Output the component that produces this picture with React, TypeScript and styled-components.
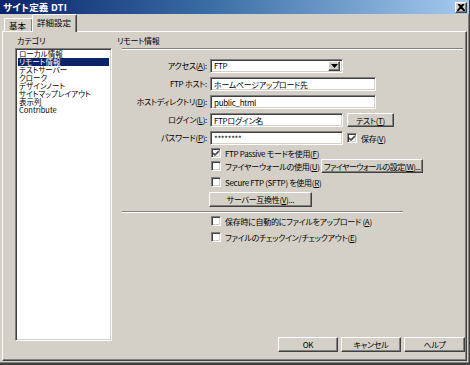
import React from 'react';
import styled, { createGlobalStyle, css } from 'styled-components';

const GlobalStyle = createGlobalStyle`
    html, body {
        margin: 0;
        padding: 0;
        background: #d4d0c8;
    }
    body {
        font-family: "Noto Sans CJK JP", "Noto Sans", sans-serif;
        font-feature-settings: "palt";
        color: #000;
    }
`;

const FS = '8px';

const raised = css`
    border: 1px solid;
    border-color: #ffffff #404040 #404040 #ffffff;
    box-shadow: inset -1px -1px 0 #808080;
`;

const sunken = css`
    border: 1px solid;
    border-color: #808080 #ffffff #ffffff #808080;
    box-shadow: inset 1px 1px 0 #404040, inset -1px -1px 0 #d4d0c8;
`;

const Key = ({ k }: { k: string }) => (
    <>
        (<u>{k}</u>)
    </>
);

const categories = ['ローカル情報', 'リモート情報', 'テストサーバー', 'クローク', 'デザインノート', 'サイトマップレイアウト', '表示列', 'Contribute'];

const App = () => (
    <>
        <GlobalStyle />
        <Window>
            <TitleBar>
                <Title>サイト定義 DTI</Title>
                <CloseButton>
                    <svg width="8" height="7" viewBox="0 0 8 7">
                        <path d="M1 0 L7 7 M7 0 L1 7 M2 0 L8 7 M6 0 L0 7" stroke="#000" strokeWidth="1.2" />
                    </svg>
                </CloseButton>
            </TitleBar>

            <TabStrip>
                <Tab>基本</Tab>
                <Tab $active>詳細設定</Tab>
            </TabStrip>

            <Panel>
                <CategoryColumn>
                    <SmallLabel>カテゴリ</SmallLabel>
                    <ListBox>
                        {categories.map((item, i) => (
                            <ListItem key={item} $selected={i === 1}>
                                {item}
                            </ListItem>
                        ))}
                    </ListBox>
                </CategoryColumn>

                <ContentColumn>
                    <SectionTitle>リモート情報</SectionTitle>
                    <Etched $width={341} />

                    <FormGrid>
                        <FieldLabel>アクセス<Key k="A" />:</FieldLabel>
                        <Select>
                            <FieldText>FTP</FieldText>
                            <DropButton>
                                <svg width="7" height="4" viewBox="0 0 7 4">
                                    <path d="M0 0 H7 L3.5 4 Z" fill="#000" />
                                </svg>
                            </DropButton>
                        </Select>

                        <FieldLabel>FTP ホスト:</FieldLabel>
                        <TextBox $width={166}>ホームページアップロード先</TextBox>

                        <FieldLabel>ホストディレクトリ<Key k="D" />:</FieldLabel>
                        <TextBox $width={166}>public_html</TextBox>

                        <FieldLabel>ログイン<Key k="L" />:</FieldLabel>
                        <Inline>
                            <TextBox $width={133}>FTPログイン名</TextBox>
                            <PushButton $width={47}>テスト<Key k="T" /></PushButton>
                        </Inline>

                        <FieldLabel>パスワード<Key k="P" />:</FieldLabel>
                        <Inline>
                            <TextBox $width={133}>********</TextBox>
                            <CheckRow>
                                <CheckBox $checked />
                                保存<Key k="V" />
                            </CheckRow>
                        </Inline>
                    </FormGrid>

                    <Options>
                        <CheckRow $top={2}>
                            <CheckBox $checked />
                            FTP Passive モードを使用<Key k="F" />
                        </CheckRow>
                        <CheckRow $height={14}>
                            <CheckBox />
                            <CheckText $width={96}>ファイヤーウォールの使用<Key k="U" /></CheckText>
                            <PushButton $width={102} $tight>
                                ファイヤーウォールの設定<Key k="W" />...
                            </PushButton>
                        </CheckRow>
                        <CheckRow $top={3}>
                            <CheckBox />
                            Secure FTP (SFTP) を使用<Key k="R" />
                        </CheckRow>
                        <ButtonRow>
                            <PushButton $width={103} $height={15}>
                                サーバー互換性<Key k="V" />...
                            </PushButton>
                        </ButtonRow>
                    </Options>

                    <Separator />

                    <Options>
                        <CheckRow $top={2}>
                            <CheckBox />
                            保存時に自動的にファイルをアップロード <Key k="A" />
                        </CheckRow>
                        <CheckRow $top={4}>
                            <CheckBox />
                            ファイルのチェックイン/チェックアウト<Key k="E" />
                        </CheckRow>
                    </Options>

                    <DialogButtons>
                        <PushButton $width={60} $height={15}>OK</PushButton>
                        <PushButton $width={60} $height={15}>キャンセル</PushButton>
                        <PushButton $width={61} $height={15}>ヘルプ</PushButton>
                    </DialogButtons>
                </ContentColumn>
            </Panel>
        </Window>
    </>
);

const CheckBox = ({ $checked }: { $checked?: boolean }) => (
    <CheckSquare>
        {$checked && (
            <svg width="8" height="8" viewBox="0 0 8 8">
                <path d="M1 3.5 L3 5.5 L7 1.5 M1 4.5 L3 6.5 L7 2.5" stroke="#000" strokeWidth="1" fill="none" />
            </svg>
        )}
    </CheckSquare>
);

export default App;

const Window = styled.div`
    width: 470px;
    height: 365px;
    box-sizing: border-box;
    display: flex;
    flex-direction: column;
    background: #d4d0c8;
    border-right: 1px solid #404040;
    border-bottom: 2px solid #404040;
    box-shadow: inset -1px -1px 0 #808080;
    padding-bottom: 2px;
    overflow: hidden;
`;

const TitleBar = styled.div`
    height: 14px;
    flex: none;
    display: flex;
    align-items: center;
    justify-content: space-between;
    padding: 0 2px 0 3px;
    background: linear-gradient(to right, #0a246a 0%, #3a6ea5 45%, #a6caf0 100%);
`;

const Title = styled.div`
    color: #fff;
    font-weight: bold;
    font-size: 9.5px;
    line-height: 12px;
    letter-spacing: 0.2px;
`;

const CloseButton = styled.div`
    ${raised};
    width: 10px;
    height: 9px;
    background: #d4d0c8;
    display: flex;
    align-items: center;
    justify-content: center;
`;

const TabStrip = styled.div`
    height: 17px;
    flex: none;
    display: flex;
    align-items: flex-end;
    padding-left: 4px;
`;

const Tab = styled.div<{ $active?: boolean }>`
    position: relative;
    box-sizing: border-box;
    font-size: 8.5px;
    line-height: 10px;
    background: #d4d0c8;
    border: 1px solid;
    border-color: #ffffff #404040 transparent #ffffff;
    border-bottom: none;
    border-radius: 2px 2px 0 0;
    box-shadow: inset -1px 0 0 #808080;

    ${_ =>
        _.$active
            ? css`
                  z-index: 1;
                  height: 18px;
                  margin-bottom: -1px;
                  margin-left: -1px;
                  padding: 2px 5px 0 4px;
              `
            : css`
                  height: 13px;
                  padding: 1px 6px 0 4px;
                  width: 29px;
              `}
`;

const Panel = styled.div`
    flex: 1;
    display: grid;
    grid-template-columns: 97px 1fr;
    column-gap: 5px;
    margin: 0 2px 0 2px;
    padding: 4px 1px 7px 12px;
    border: 1px solid;
    border-color: #ffffff #404040 #404040 #ffffff;
    box-shadow: inset -1px -1px 0 #808080;
`;

const CategoryColumn = styled.div`
    display: flex;
    flex-direction: column;
`;

const SmallLabel = styled.div`
    font-size: ${FS};
    line-height: 10px;
    height: 10px;
    padding-left: 2px;
    margin-bottom: 2px;
`;

const ListBox = styled.div`
    ${sunken};
    flex: 1;
    margin-bottom: 12px;
    background: #fff;
    padding: 1px 2px;
`;

const ListItem = styled.div<{ $selected?: boolean }>`
    font-size: 7.5px;
    line-height: 8px;
    height: 8px;
    padding-left: 1px;
    white-space: nowrap;
    background: ${_ => (_.$selected ? '#0a246a' : 'transparent')};
    color: ${_ => (_.$selected ? '#fff' : '#000')};
`;

const ContentColumn = styled.div`
    display: flex;
    flex-direction: column;
    font-size: ${FS};
    letter-spacing: -0.3px;
`;

const SectionTitle = styled.div`
    font-size: ${FS};
    line-height: 10px;
    height: 10px;
    margin-bottom: 2px;
`;

const Etched = styled.div<{ $width: number }>`
    width: ${_ => _.$width}px;
    margin-left: 5px;
    height: 0;
    border-top: 1px solid #808080;
    border-bottom: 1px solid #ffffff;
`;

const FormGrid = styled.div`
    display: grid;
    grid-template-columns: 90px auto;
    column-gap: 3px;
    row-gap: 4px;
    margin-top: 9px;
    justify-content: start;
    align-items: center;
`;

const FieldLabel = styled.div`
    text-align: right;
    white-space: nowrap;
    line-height: 14px;
    font-size: ${FS};
`;

const fieldBox = css`
    ${sunken};
    box-sizing: border-box;
    height: 14px;
    background: #fff;
    display: flex;
    align-items: center;
    padding-left: 3px;
    font-size: ${FS};
    white-space: nowrap;
`;

const TextBox = styled.div<{ $width: number }>`
    ${fieldBox};
    width: ${_ => _.$width}px;
`;

const Select = styled.div`
    ${fieldBox};
    width: 133px;
    justify-content: space-between;
    padding-right: 2px;
`;

const FieldText = styled.span`
    line-height: 10px;
`;

const DropButton = styled.div`
    ${raised};
    box-sizing: border-box;
    width: 12px;
    height: 10px;
    background: #d4d0c8;
    display: flex;
    align-items: center;
    justify-content: center;
`;

const Inline = styled.div`
    display: flex;
    align-items: center;
    gap: 4px;
`;

const PushButton = styled.div<{ $width: number; $height?: number; $tight?: boolean }>`
    ${raised};
    box-sizing: border-box;
    width: ${_ => _.$width}px;
    height: ${_ => _.$height ?? 14}px;
    background: #d4d0c8;
    display: flex;
    align-items: center;
    justify-content: center;
    font-size: ${FS};
    letter-spacing: ${_ => (_.$tight ? '-0.6px' : '-0.3px')};
    white-space: nowrap;
    flex: none;
`;

const Options = styled.div`
    display: flex;
    flex-direction: column;
    margin-left: 94px;
`;

const CheckRow = styled.div<{ $top?: number; $height?: number }>`
    display: flex;
    align-items: center;
    height: ${_ => _.$height ?? 12}px;
    margin-top: ${_ => _.$top ?? 0}px;
    font-size: ${FS};
    white-space: nowrap;
`;

const CheckText = styled.span<{ $width: number }>`
    width: ${_ => _.$width}px;
    flex: none;
`;

const CheckSquare = styled.div`
    ${sunken};
    box-sizing: border-box;
    width: 10px;
    height: 10px;
    background: #fff;
    margin-right: 4px;
    display: flex;
    align-items: center;
    justify-content: center;
    flex: none;
`;

const ButtonRow = styled.div`
    margin-top: 4px;
    margin-left: -2px;
`;

const Separator = styled.div`
    margin: 4px 0 0 5px;
    width: 281px;
    height: 0;
    border-top: 1px solid #808080;
    border-bottom: 1px solid #ffffff;
`;

const DialogButtons = styled.div`
    margin-top: auto;
    display: flex;
    justify-content: flex-end;
    gap: 3px;
    margin-bottom: 1px;
`;
